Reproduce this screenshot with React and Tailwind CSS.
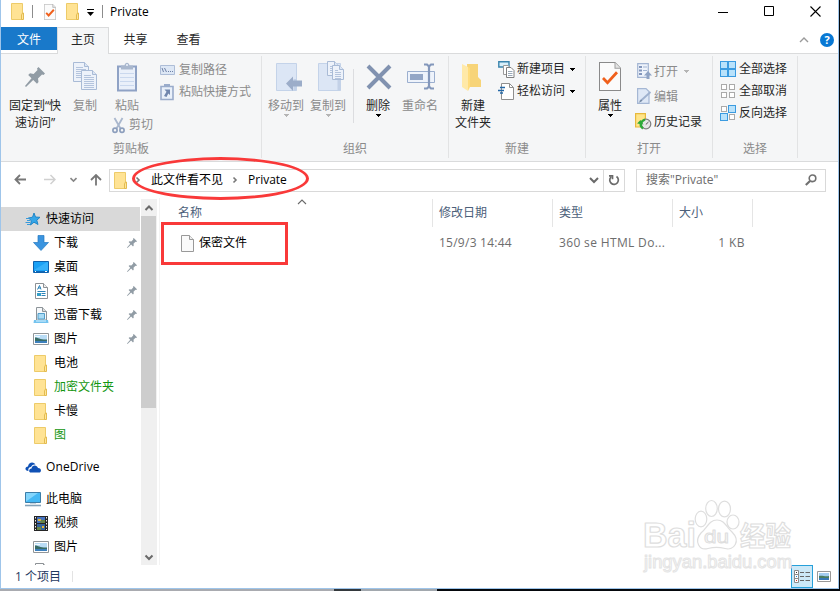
import React from "react";

const PinIcon = ({ className }) => (
  <svg className={className} viewBox="0 0 20 20" fill="#919ca5">
    <path d="M13.500 0 20 6.500 18.500 8 17 7.600 13 11.600 13.500 15 12 16.800 8.200 13 1 20 0 19 6.500 11.300 3.200 8 5 6.300 8.600 7 12.500 3 12 1.500Z" />
  </svg>
);

const Folder = ({ className }) => (
  <svg className={className} width="14" height="17" viewBox="0 0 14 17">
    <path d="M.5.5H11.5V16.5H.5Z" fill="#ffe394" stroke="#edcb69" />
    <path d="M12.5 10V16.5H10.500V12L11.500 10Z" fill="#ffe699" stroke="#e3bb50" />
  </svg>
);

const Caret = ({ className }) => (
  <svg className={className} width="5" height="3" viewBox="0 0 5 3" fill="currentColor" shapeRendering="crispEdges">
    <path d="M0 0H5V1H4V2H3V3H2V2H1V1H0Z" />
  </svg>
);

const Chevron = ({ d, className, w = 2, color = "#6a6a6a" }) => (
  <svg className={className} width="10" height="10" viewBox="0 0 10 10" fill="none" stroke={color} strokeWidth={w}>
    <path d={d} />
  </svg>
);
const DOWN = "M1 3 5 7 9 3";
const UP = "M1 7 5 3 9 7";
const RIGHT = "M3.5 2.500 6 5 3.5 7.500";

const CheckDoc = ({ w, h, check = 2.8, line = "#8a8a8a" }) => (
  <svg width={w} height={h} viewBox="0 0 22 28" preserveAspectRatio="none">
    <path d="M.5.5H16L21.5 6V27.5H.5Z" fill="#fbfbfb" stroke={line} />
    <path d="M16 .5V6H21.5" fill="#e4e4e4" stroke="#a0a0a0" />
    <path d="M4 15.5 8.500 20 18 10" fill="none" stroke="#f0601c" strokeWidth={check} />
  </svg>
);

const Page = ({ x, y, w, h, lines = 4 }) => (
  <g>
    <path d={`M${x} ${y}h${w - 4}l4 4v${h - 4}h${-w}Z`} fill="#edf2fa" stroke="#a9bbd6" />
    <path d={`M${x + w - 4} ${y}v4h4`} fill="#dbe5f3" stroke="#a9bbd6" />
    {Array.from({ length: lines }, (_, i) => (
      <path key={i} d={`M${x + 2.5} ${y + 5 + i * 2}h${i === 0 ? w - 8 : w - 5}`} stroke="#b4c4dd" />
    ))}
  </g>
);

const CopyIcon = () => (
  <svg width="25" height="29" viewBox="0 0 25 29">
    <Page x={0.5} y={0.5} w={15} h={19} lines={6} />
    <Page x={8.5} y={8.5} w={15} h={19} lines={7} />
  </svg>
);

const PasteIcon = () => (
  <svg width="20" height="30" viewBox="0 0 20 30">
    <path d="M1 4.500H19V28.500H1Z" fill="#eaf0fa" stroke="#8fa2c5" strokeWidth="2" />
    <path d="M4 3.500H7.500C8-.2 12-.2 12.500 3.500H16V7.500H4Z" fill="#a9b7cd" />
    <path d="M9 3H11" stroke="#eef3fb" strokeWidth="1.500" />
    <path d="M3 11.500H17M3 15.500H17M3 19.500H17M3 23.500H17" stroke="#cad8ee" />
  </svg>
);

const ScissorsIcon = () => (
  <svg width="13" height="17" viewBox="0 0 13 17" fill="none">
    <path d="M2.500 1 8.500 11.500M10.500 1 4.500 11.500" stroke="#a9b7cd" strokeWidth="1.800" />
    <circle cx="3" cy="13.300" r="2.100" stroke="#8d9fbd" strokeWidth="1.700" />
    <circle cx="10" cy="13.300" r="2.100" stroke="#8d9fbd" strokeWidth="1.700" />
  </svg>
);

const PathIcon = () => (
  <svg width="15" height="10" viewBox="0 0 15 10" fill="none">
    <path d="M.5.5H14.500V9.500H.5Z" fill="#dde7f5" stroke="#adbdd7" />
    <path d="M2 3 3.500 7M4.500 3 6.500 7M8 6.500H9M10 6.500H11M12 6.500H13" stroke="#6d80a6" />
  </svg>
);

const ShortcutIcon = () => (
  <svg width="14" height="17" viewBox="0 0 14 17">
    <path d="M1 2.500H13V15.500H1Z" fill="#e9f0fa" stroke="#9aaccb" strokeWidth="1.600" />
    <path d="M4 0H10V3H4Z" fill="#9aaccb" />
    <path d="M4.500 5.500H10V11L8.300 9.400 6.500 13 4 12 6.500 7.800Z" fill="#7187ae" />
  </svg>
);

const MoveIcon = () => (
  <svg width="27" height="30" viewBox="0 0 27 30">
    <path d="M.5 1.500H20.500V28.500H.5Z" fill="#dce6f5" stroke="#c4d3e9" />
    <path d="M17.500 17V28.500H20.500V17Z" fill="#c3d1e7" />
    <path d="M10 21.500 17 14.500V18.500H26V24.500H17V29Z" fill="#9cadc9" />
  </svg>
);

const CopyToIcon = () => (
  <svg width="27" height="31" viewBox="0 0 27 31">
    <path d="M.5 2.500H22.500V29.500H.5Z" fill="#dce6f5" stroke="#c4d3e9" />
    <path d="M19.500 18H22.500V29.500H19.500Z" fill="#c3d1e7" />
    <Page x={9.5} y={0.5} w={11} h={14} lines={4} />
    <Page x={14.5} y={4.5} w={11} h={14} lines={5} />
  </svg>
);

const DeleteIcon = () => (
  <svg width="26" height="26" viewBox="0 0 26 26">
    <path d="M2 2 24 24M24 2 2 24" stroke="#8192b0" strokeWidth="4" />
  </svg>
);

const RenameIcon = () => (
  <svg width="28" height="27" viewBox="0 0 28 27">
    <path d="M.5 8.500H27.500V19.500H.5Z" fill="#eef3fb" stroke="#9bafcf" />
    <path d="M3 11H16V17H3Z" fill="#93a6c6" />
    <path d="M17 1.500H20L22 3.500 24 1.500H27M17 25.500H20L22 23.500 24 25.500H27M22 3V24" fill="none" stroke="#8397bb" strokeWidth="2.200" />
  </svg>
);

const BigFolder = () => (
  <svg className="mr-[2px]" width="20" height="28" viewBox="0 0 20 28">
    <path d="M5 1H16V14L19 17V24H5Z" fill="#f7d478" />
    <path d="M0 1 6 4V28L0 24Z" fill="#ffe9a8" />
    <path d="M6 4V28L8 24V5Z" fill="#ffdc7c" />
  </svg>
);

const NewItemIcon = () => (
  <svg width="17" height="17" viewBox="0 0 17 17">
    <path d="M.8.8H11V6H.8Z" fill="#d9f0fb" stroke="#3a84ad" strokeWidth="1.400" />
    <path d="M5.500 4.500H10L12.500 7V13.500H5.500Z" fill="#fff" stroke="#9a9a9a" />
    <path d="M8.500 6.500H13L16 9.500V16.500H8.500Z" fill="#fff" stroke="#808080" />
    <path d="M10 10.500H14.500M10 12.500H14.500M10 14.500H14.500" stroke="#9aa9b8" />
  </svg>
);

const EasyIcon = () => (
  <svg width="17" height="17" viewBox="0 0 17 17">
    <path d="M3.500.5H11.500L15.500 4.500V16.500H3.500Z" fill="#fff" stroke="#8f8f8f" />
    <path d="M11.500.5V4.500H15.500" fill="none" stroke="#8f8f8f" />
    <path d="M2 4.500H7M0 7.500H6M2 10H5" stroke="#2569a8" strokeWidth="1.500" />
  </svg>
);

const OpenIcon = () => (
  <svg width="15" height="17" viewBox="0 0 15 17">
    <path d="M.7.700H11.300V14.300H.7Z" fill="#eef3fb" stroke="#a3b5d2" strokeWidth="1.200" />
    <path d="M2 3H5V5H2ZM2 6.500H5V8.500H2ZM2 10H5V12H2Z" fill="#8296bb" />
    <path d="M6 4H10M6 7.500H10" stroke="#a3b5d2" />
    <path d="M11 8 15 12.500H12.500V16H9.500V12.500H7Z" fill="#8fa3c4" />
  </svg>
);

const EditIcon = () => (
  <svg width="15" height="17" viewBox="0 0 15 17">
    <path d="M.6.600H9L12 3.600V15.400H.6Z" fill="#dfe8f6" stroke="#a5b7d4" strokeWidth="1.200" />
    <path d="M3 13.500 13.500 4" stroke="#9fb1ce" strokeWidth="1.800" />
    <path d="M1.500 15 4 11.500 5.200 12.800Z" fill="#72869f" />
  </svg>
);

const HistoryIcon = () => (
  <svg width="17" height="17" viewBox="0 0 17 17">
    <path d="M.6.600H10.400V14H.6Z" fill="#ffe58a" stroke="#e7b93c" strokeWidth="1.200" />
    <circle cx="11" cy="11" r="4.800" fill="#e6e6e6" stroke="#7d7d7d" strokeWidth="1.200" />
    <path d="M10.800 11.500 13.500 9" fill="none" stroke="#555" />
    <path d="M8 15.500C4.500 13 5 8.500 10 6.500" fill="none" stroke="#2eaa3a" strokeWidth="2.400" />
    <path d="M2 10.500 5.500 7 8.500 11.500Z" fill="#2eaa3a" />
  </svg>
);

const GridIcon = ({ on }) => {
  const cells = [[0, 0], [1, 0], [0, 1], [1, 1]];
  return (
    <svg width="16" height="16" viewBox="0 0 16 16">
      {cells.map(([cx, cy], i) => {
        const lit = on.includes(i);
        const s = lit ? 7 : 5;
        const off = lit ? 0.5 : 1.5;
        return (
          <rect key={i} x={cx * 8 + off} y={cy * 8 + off} width={s} height={s} fill={lit ? "#b9e2fb" : "#fff"} stroke={lit ? "#3b9be0" : "#aaa"} />
        );
      })}
    </svg>
  );
};

const StarIcon = () => (
  <svg width="16" height="16" viewBox="0 0 16 16">
    <path d="M9 2 10.500 6 15 6.300 11.800 9.200 13 13.500 9 11.200 5.500 14 6.300 9.600 3.500 7 7.500 6.200Z" fill="#35a6e8" stroke="#1980c3" strokeWidth=".9" />
    <path d="M1 7.500H4.500M2 9.500H5.500M.5 11.500H5M2 13.500H5" stroke="#3a9ada" />
  </svg>
);

const DownloadIcon = () => (
  <svg width="16" height="16" viewBox="0 0 16 16">
    <path d="M5 .5H11V7.500H15.500L8 15.500.5 7.500H5Z" fill="#3a94df" stroke="#2478c2" strokeWidth=".7" />
  </svg>
);

const DesktopIcon = () => (
  <svg width="16" height="12" viewBox="0 0 16 12">
    <path d="M.5.5H15.500V11.500H.5Z" fill="#1ba1f5" stroke="#0f62ae" />
    <path d="M1 9 14 1H15V9Z" fill="#36b1fb" />
    <path d="M1 10.500H15" stroke="#0d69b8" />
    <path d="M2 10.500H3M12 10.500H14" stroke="#fff" />
  </svg>
);

const DocIcon = () => (
  <svg width="13" height="16" viewBox="0 0 13 16">
    <path d="M.5.5H8.500L12.500 4.500V15.500H.5Z" fill="#fff" stroke="#8c9195" />
    <path d="M8.500.5V4.500H12.500" fill="#eee" stroke="#8c9195" />
    <path d="M2.500 6.500 4.500 2.500 6 6.500M3 5H6M2.500 8.500H10.500M6.500 10.500H10.500M6.500 12.500H10.500" fill="none" stroke="#2b83b8" />
    <path d="M2 10H6V13H2Z" fill="#349fc8" />
  </svg>
);

const ThunderIcon = () => (
  <svg width="16" height="17" viewBox="0 0 16 17">
    <path d="M3.500.5H9.500L13.500 4.500V13H3.500Z" fill="#f6f8fa" stroke="#8d9499" />
    <path d="M9.500.5V4.500H13.500" fill="#ddd" stroke="#8d9499" />
    <path d="M5 6.500H11.500V12H5Z" fill="#a9dbf5" stroke="#539dc8" />
    <path d="M1 13H15L15.500 16H.5Z" fill="#74c3ee" />
    <path d="M3 14H13" stroke="#d9f2ff" />
  </svg>
);

const PictureIcon = () => (
  <svg width="16" height="12" viewBox="0 0 16 12">
    <path d="M.5.5H15.500V11.500H.5Z" fill="#fff" stroke="#919699" />
    <path d="M2 2H14V10H2Z" fill="#b9dcf5" />
    <path d="M2 4.500C5 4.500 8 7 14 6.500V8H2Z" fill="#386c65" />
    <path d="M2 8H14V10H2Z" fill="#3d80bd" />
    <path d="M2 3.500H7" stroke="#eef8ff" />
  </svg>
);

const CloudIcon = () => (
  <svg width="16" height="11" viewBox="0 0 16 11" fill="#1051b5">
    <path d="M3.500 9C-1 9 0 4.500 3 4.500 3.500 0 8.500-1 10.500 2.500 8 2 6.500 3.500 6 5 3.500 5 3 7.500 3.500 9Z" />
    <path d="M6 10.500C3 10.500 4 6.500 6.500 6.500 7 2.500 12 2.500 13 6 17 6 16.500 10.500 14 10.500Z" />
  </svg>
);

const PcIcon = () => (
  <svg width="16" height="15" viewBox="0 0 16 15">
    <path d="M.5.5H15.500V10.500H.5Z" fill="#45b8f4" stroke="#3b7da8" />
    <path d="M1 9.500 13 1H1Z" fill="#83d5fc" />
    <path d="M0 13.500H16" stroke="#84a2b8" strokeWidth="1.600" />
    <path d="M5 11.500H11" stroke="#c6d4df" />
  </svg>
);

const VideoIcon = () => (
  <svg width="14" height="15" viewBox="0 0 14 15">
    <path d="M0 0H14V15H0Z" fill="#262626" />
    <path d="M3 1H11V7H3Z" fill="#4673bf" />
    <path d="M3 8H11V14H3Z" fill="#36649d" />
    <path d="M4 3H7V5H4ZM8 10H10V12H8Z" fill="#e3b638" />
    <path d="M7 4H11V7H6ZM3 11H7V14H3Z" fill="#678447" />
    <path d="M1.500 1V14M12.500 1V14" stroke="#eee" strokeDasharray="1.500 1.500" />
  </svg>
);

const BlankDoc = () => (
  <svg width="13" height="17" viewBox="0 0 13 17">
    <path d="M.5.5H8.500L12.500 4.500V16.500H.5Z" fill="#fafafa" stroke="#999" />
    <path d="M8.500.5V4.500H12.500" fill="#eee" stroke="#999" />
  </svg>
);

/* Tall ribbon button: icon area, label lines, optional drop-down caret */
const BigButton = ({ icon, lines, width, muted, caret }) => (
  <div className={`${width} flex shrink-0 flex-col items-center ${muted ? "text-[#8b8b8b]" : "text-[#262626]"}`}>
    <div className="flex h-[31px] items-center justify-center">{icon}</div>
    <div className="mt-[5px] text-center leading-[17px] whitespace-nowrap">
      {lines.map((l) => (
        <div key={l}>{l}</div>
      ))}
    </div>
    {caret && <Caret className={muted ? "text-[#b5b5b5]" : "text-black"} />}
  </div>
);

const SmallButton = ({ icon, label, muted, caret, h = "h-[22px]", iconW = "w-[19px]" }) => (
  <div className={`flex ${h} items-center whitespace-nowrap ${muted ? "text-[#8b8b8b]" : "text-[#262626]"}`}>
    <span className={`${iconW} shrink-0`}>{icon}</span>
    {label}
    {caret && <Caret className={muted ? "ml-[6px] text-[#b5b5b5]" : "ml-[5px] text-black"} />}
  </div>
);

const Group = ({ width, label, children }) => (
  <div className={`${width} flex shrink-0 flex-col border-r border-[#e2e3e4]`}>
    <div className="flex h-[85px] pt-[5px]">{children}</div>
    <div className="text-center leading-[18px] text-[#8b8b8b]">{label}</div>
  </div>
);

const NavItem = ({ icon, label, indent = "pl-[32px]", pinned, green }) => (
  <div className={`flex h-[24px] shrink-0 items-center ${indent}`}>
    <span className="mr-[5px] flex w-[16px] justify-center">{icon}</span>
    <span className={`whitespace-nowrap ${green ? "text-[#13960f]" : "text-black"}`}>{label}</span>
    {pinned && <PinIcon className="mr-[3px] ml-auto h-[10px] w-[10px]" />}
  </div>
);

export default function App() {
  return (
    <div className="relative flex h-[591px] w-[840px] flex-col overflow-hidden bg-[#05080c] font-['Open_Sans','Noto_Sans_CJK_SC',sans-serif] text-[12px] leading-[18px] text-black">
      <div className="flex h-[589px] w-[839px] flex-col border-r border-b border-l border-[#9fc5ea] bg-white">
        {/* Title bar */}
        <div className="flex h-[27px] shrink-0">
          <div className="flex h-[23px] items-center">
            <Folder className="ml-[10px]" />
            <i className="ml-[7px] h-[13px] w-px bg-[#8c8c8c]" />
            <span className="ml-[11px]"><CheckDoc w={12} h={16} check={3.6} line="#999" /></span>
            <Folder className="ml-[10px]" />
            <span className="ml-[7px] flex flex-col gap-[2px] pt-[2px]">
              <i className="h-px w-[7px] bg-black" />
              <svg width="7" height="4" viewBox="0 0 7 4"><path d="M0 0H7L3.500 4Z" /></svg>
            </span>
            <i className="ml-[8px] h-[13px] w-px bg-[#8c8c8c]" />
            <span className="ml-[7px]">Private</span>
          </div>
          <div className="mr-[17px] ml-auto flex h-[22px] items-center gap-[35px]">
            <svg width="11" height="11" viewBox="0 0 11 11"><path d="M0 6.500H10" stroke="#000" /></svg>
            <svg width="11" height="11" viewBox="0 0 11 11"><path d="M.5.5H9.500V9.500H.5Z" fill="none" stroke="#000" /></svg>
            <svg width="11" height="11" viewBox="0 0 11 11"><path d="M.5.5 10.500 10.500M10.500.5.5 10.500" stroke="#000" strokeWidth="1.100" /></svg>
          </div>
        </div>

        {/* Ribbon tabs */}
        <div className="flex h-[27px] shrink-0 border-b border-[#dadbdc] text-[#262626]">
          <div className="h-[23px] w-[56px] bg-[#1979ca] text-center leading-[25px] text-white">文件</div>
          <div className="h-[27px] w-[52px] border-x border-t border-[#dadbdc] bg-[#f5f6f7] text-center leading-[24px]">主页</div>
          <div className="w-[53px] text-center leading-[26px]">共享</div>
          <div className="w-[53px] text-center leading-[26px]">查看</div>
          <div className="mr-[4px] ml-auto flex items-center gap-[11px]">
            <Chevron d={UP} w={1.4} color="#9a9a9a" />
            <span className="h-[14px] w-[14px] rounded-full bg-[#0878d4] text-center text-[11px] leading-[14px] font-bold text-white">?</span>
          </div>
        </div>

        {/* Ribbon */}
        <div className="flex h-[108px] shrink-0 border-b border-[#dadbdc] bg-[#f5f6f7] pt-[2px] pb-[3px]">
          <Group width="w-[261px]" label="剪贴板">
            <BigButton width="w-[68px]" icon={<PinIcon className="h-[20px] w-[20px]" />} lines={["固定到“快", "速访问”"]} />
            <BigButton width="w-[32px]" muted icon={<CopyIcon />} lines={["复制"]} />
            <div className="w-[52px]">
              <BigButton width="w-[52px]" muted icon={<PasteIcon />} lines={["粘贴"]} />
              <div className="pl-[11px]">
                <SmallButton muted iconW="w-[17px]" icon={<ScissorsIcon />} label="剪切" />
              </div>
            </div>
            <div className="-mt-[2px] ml-[7px]">
              <SmallButton muted icon={<PathIcon />} label="复制路径" />
              <SmallButton muted icon={<ShortcutIcon />} label="粘贴快捷方式" />
            </div>
          </Group>
          <Group width="w-[187px]" label="组织">
            <div className="flex pl-[3px]">
              <BigButton width="w-[42px]" muted caret icon={<span className="pl-[6px]"><MoveIcon /></span>} lines={["移动到"]} />
              <BigButton width="w-[42px]" muted caret icon={<span className="pl-[6px]"><CopyToIcon /></span>} lines={["复制到"]} />
              <i className="mx-[4px] mt-[8px] h-[54px] w-px bg-[#dcdde0]" />
              <BigButton width="w-[40px]" caret icon={<span className="pl-[2px]"><DeleteIcon /></span>} lines={["删除"]} />
              <BigButton width="w-[44px]" muted icon={<span className="pl-[2px]"><RenameIcon /></span>} lines={["重命名"]} />
            </div>
          </Group>
          <Group width="w-[137px]" label="新建">
            <BigButton width="w-[48px]" icon={<BigFolder />} lines={["新建", "文件夹"]} />
            <div className="-mt-[3px] ml-px">
              <SmallButton caret icon={<NewItemIcon />} label="新建项目" />
              <SmallButton caret icon={<EasyIcon />} label="轻松访问" />
            </div>
          </Group>
          <Group width="w-[127px]" label="打开">
            <BigButton width="w-[48px]" caret icon={<CheckDoc w={22} h={29} />} lines={["属性"]} />
            <div className="-mt-[2px] ml-[3px]">
              <SmallButton muted caret h="h-[25px]" iconW="w-[17px]" icon={<OpenIcon />} label="打开" />
              <SmallButton muted h="h-[25px]" iconW="w-[17px]" icon={<EditIcon />} label="编辑" />
              <SmallButton h="h-[25px]" iconW="w-[19px] -ml-[2px]" icon={<HistoryIcon />} label="历史记录" />
            </div>
          </Group>
          <Group width="w-[85px]" label="选择">
            <div className="-mt-[3px] pl-[7px]">
              <SmallButton icon={<GridIcon on={[0, 1, 2, 3]} />} label="全部选择" />
              <SmallButton icon={<GridIcon on={[]} />} label="全部取消" />
              <SmallButton icon={<GridIcon on={[1, 2]} />} label="反向选择" />
            </div>
          </Group>
        </div>

        {/* Address bar */}
        <div className="flex h-[36px] shrink-0 items-center">
          <svg className="ml-[13px]" width="12" height="12" viewBox="0 0 12 12" fill="none" stroke="#777" strokeWidth="1.800"><path d="M12 5.500H1.500M6 1 1.500 5.500 6 10" /></svg>
          <svg className="ml-[18px]" width="12" height="12" viewBox="0 0 12 12" fill="none" stroke="#d0d0d0" strokeWidth="1.500"><path d="M0 5.500H11M6.500 1 11 5.500 6.500 10" /></svg>
          <svg className="ml-[14px]" width="7" height="6" viewBox="0 0 7 6" fill="none" stroke="#888" strokeWidth="1.600"><path d="M.5 1 3.500 4 6.500 1" /></svg>
          <svg className="ml-[13px]" width="12" height="12" viewBox="0 0 12 12" fill="none" stroke="#777" strokeWidth="1.800"><path d="M6 11.500V1.500M1 6 6 1 11 6" /></svg>
          <div className="ml-[7px] flex h-[23px] w-[516px] items-center border border-[#d9d9d9]">
            <Folder className="ml-[4px]" />
            <Chevron className="ml-[5px]" d={RIGHT} w={1.6} color="#777" />
            <span className="ml-[8px]">此文件看不见</span>
            <Chevron className="ml-[7px]" d={RIGHT} w={1.6} color="#777" />
            <span className="ml-[8px]">Private</span>
            <Chevron className="mr-[4px] ml-auto" d={DOWN} />
            <div className="flex h-full w-[21px] items-center justify-center border-l border-[#d9d9d9]">
              <svg width="12" height="12" viewBox="0 0 12 12" fill="none" stroke="#6a6a6a" strokeWidth="1.700">
                <path d="M8.500 2.500A4.300 4.300 0 1 1 3 3M1 1.800H4.500V5.200" />
              </svg>
            </div>
          </div>
          <div className="ml-[11px] flex h-[23px] w-[190px] items-center border border-[#d9d9d9] pl-[9px] text-[#6d6d6d]">
            搜索"Private"
            <svg className="mr-[8px] ml-auto" width="12" height="12" viewBox="0 0 12 12" fill="none" stroke="#707070"><circle cx="7.500" cy="4.300" r="3.300" strokeWidth="1.600" /><path d="M5 7 .8 11" strokeWidth="2.200" /></svg>
          </div>
        </div>

        {/* Body */}
        <div className="flex h-[367px] shrink-0">
          <div className="flex w-[139px] shrink-0 flex-col overflow-hidden pt-[9px]">
            <div className="bg-[#d9d9d9]">
              <NavItem indent="pl-[24px]" icon={<StarIcon />} label="快速访问" />
            </div>
            <NavItem pinned icon={<DownloadIcon />} label="下载" />
            <NavItem pinned icon={<DesktopIcon />} label="桌面" />
            <NavItem pinned icon={<DocIcon />} label="文档" />
            <NavItem pinned icon={<ThunderIcon />} label="迅雷下载" />
            <NavItem pinned icon={<PictureIcon />} label="图片" />
            <NavItem icon={<Folder />} label="电池" />
            <NavItem green icon={<Folder />} label="加密文件夹" />
            <NavItem icon={<Folder />} label="卡慢" />
            <NavItem green icon={<Folder />} label="图" />
            <div className="mt-[8px] mb-[8px] tracking-[0.1px]">
              <NavItem indent="pl-[24px]" icon={<CloudIcon />} label="OneDrive" />
            </div>
            <NavItem indent="pl-[24px]" icon={<PcIcon />} label="此电脑" />
            <NavItem icon={<VideoIcon />} label="视频" />
            <NavItem icon={<PictureIcon />} label="图片" />
            <NavItem icon={<DocIcon />} label="" />
          </div>
          <div className="mt-px ml-px flex w-[16px] shrink-0 flex-col items-center bg-[#f0f0f0]">
            <Chevron className="mt-[4px] mb-[3px]" d="M1.500 7 5 3.500 8.500 7" />
            <div className="h-[192px] w-[15px] self-start bg-[#cdcdcd]" />
            <Chevron className="mt-auto mb-[3px]" d="M1.500 3.500 5 7 8.500 3.500" />
          </div>
          <div className="ml-[2px] flex flex-1 flex-col border-l border-[#f3f3f3]">
            <div className="flex h-[29px] pt-px leading-[28px] text-[#4c607a]">
              <div className="relative w-[273px] border-r border-[#e5e5e5] pl-[18px]">
                名称
                <Chevron className="absolute -top-[2px] left-[137px]" d={UP} w={1.1} />
              </div>
              <div className="w-[120px] border-r border-[#e5e5e5] pl-[6px]">修改日期</div>
              <div className="w-[120px] border-r border-[#e5e5e5] pl-[6px]">类型</div>
              <div className="w-[80px] border-r border-[#e5e5e5] pl-[6px]">大小</div>
            </div>
            <div className="mt-[4px] flex h-[24px] items-center text-[#6d6d6d]">
              <div className="flex w-[279px] items-center gap-[5px] pl-[21px] text-black">
                <BlankDoc />
                保密文件
              </div>
              <div className="w-[120px] tracking-[0.25px]">15/9/3 14:44</div>
              <div className="w-[120px] tracking-[0.35px] whitespace-nowrap">360 se HTML Do...</div>
              <div className="w-[66px] text-right tracking-[0.4px]">1 KB</div>
            </div>
          </div>
        </div>

        {/* Status bar */}
        <div className="flex h-[23px] shrink-0 items-center text-[#1f3a5f]">
          <span className="pl-[14px]">1 个项目</span>
          <i className="ml-[11px] h-[11px] w-px bg-[#e3e3e3]" />
          <div className="mr-[7px] ml-auto flex items-center gap-[4px]">
            <div className="flex h-[23px] w-[22px] items-center justify-center border border-[#26a0da] bg-[#cce8f7]">
              <svg width="16" height="13" viewBox="0 0 16 13">
                <path d="M.5.5H4.500V12.500H.5ZM.5 4.500H4.500M.5 8.500H4.500" fill="#fff" stroke="#8a8a8a" />
                <path d="M2 2.500H3" stroke="#333" /><path d="M2 6.500H3" stroke="#1787d8" /><path d="M2 10.500H3" stroke="#d02d24" />
                <path d="M6 2.500H10M11.500 2.500H16M6 6.500H10M11.500 6.500H16M6 10.500H10M11.500 10.500H16" stroke="#666" />
              </svg>
            </div>
            <svg width="14" height="11" viewBox="0 0 14 11"><path d="M.5.5H13.500V10.500H.5Z" fill="#fff" stroke="#999" /><path d="M2 2H12V9H2Z" fill="#a4cdf0" /><path d="M2 5C5 4 8 6 12 5V7H2Z" fill="#4a7c60" /><path d="M2 7H12V9H2Z" fill="#3878b5" /></svg>
          </div>
        </div>
      </div>
      <div className="flex h-[2px]">
        <i className="w-[334px] bg-[#a9abb0]" />
        <i className="w-[27px] bg-[#33383c]" />
        <i className="w-[76px] bg-[#a2a8ae]" />
      </div>

      {/* Annotations */}
      <div className="absolute top-[157px] left-[132px] h-[43px] w-[177px] rounded-[50%] border-[3px] border-[#f93939]" />
      <div className="absolute top-[222px] left-[161px] h-[43px] w-[127px] border-[3px] border-[#f93939]" />

      {/* Watermark */}
      <svg className="absolute top-[495px] left-[640px]" width="150" height="82" overflow="visible" viewBox="0 0 150 82" fill="#fff" stroke="#dedede" strokeLinejoin="round">
        <g fontFamily="Liberation Sans, Noto Sans CJK SC, sans-serif" fontWeight="700">
          <text x="3" y="52" fontSize="35" textLength="53" lengthAdjust="spacingAndGlyphs" strokeWidth="1.200">Bai</text>
          <g strokeWidth="1.200">
            <ellipse cx="61" cy="24" rx="5.800" ry="7.800" />
            <ellipse cx="71.500" cy="13.500" rx="5.800" ry="8" />
            <ellipse cx="84.500" cy="14" rx="6" ry="7.800" />
            <ellipse cx="93" cy="27" rx="6" ry="7" />
            <path d="M77 25C85 25 86 32 92 37 101 46 94 56 85 53.500 79 52 74 52 68 53.500 59 56 54 46 61 38 67 33 69 25 77 25Z" />
          </g>
          <text x="64" y="48" fontSize="19" fontWeight="400" textLength="25" lengthAdjust="spacingAndGlyphs">du</text>
          <text x="100" y="51" fontSize="27" textLength="51" lengthAdjust="spacingAndGlyphs" strokeWidth="1.200">经验</text>
        </g>
        <text x="4" y="73" fontFamily="Liberation Sans, sans-serif" fontSize="17.500" textLength="148" lengthAdjust="spacingAndGlyphs" stroke="#e4e4e4">jingyan.baidu.com</text>
      </svg>
    </div>
  );
}
